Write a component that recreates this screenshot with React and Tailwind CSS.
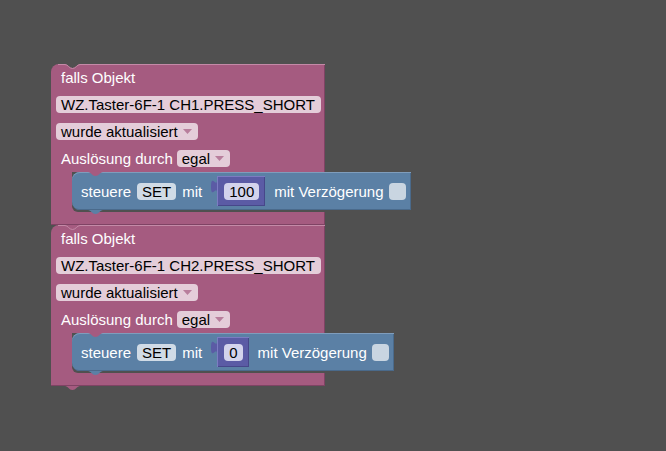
import React from "react";

const PINK = "#a55b80";
const BLUE = "#5b80a5";
const NUM = "#5b5ba5";
const BG = "#505050";

const notchPath = "M0 0 C3 0 4 4 7.5 4 C11 4 12 0 15 0 Z";

const Arrow = () => (
  <svg width="9" height="5" viewBox="0 0 9 5" className="ml-[5px]">
    <path d="M0 0 L9 0 L4.5 5 Z" fill="#b87e9c" />
  </svg>
);

const PinkField = ({ children, dropdown }) => (
  <div className="flex h-[17px] items-center rounded-[4px] bg-[#e4cdd9] pl-[5px] pr-[6px] text-black">
    <span>{children}</span>
    {dropdown && <Arrow />}
  </div>
);

const NumberBlock = ({ value }) => (
  <div className="relative ml-[15px] flex h-[30px] items-center bg-[#5b5ba5] pl-[7px] pr-[6px] shadow-[inset_1px_1px_0_#7c7cc2,inset_-1px_-1px_0_#47478a]">
    {/* output tab */}
    <svg
      width="6"
      height="13"
      viewBox="-8 0 8 15"
      preserveAspectRatio="none"
      className="absolute left-[-6px] top-[4px]"
    >
      <path d="M0 0 C0 10 -8 -8 -8 7.5 S0 5 0 15 Z" fill={NUM} />
    </svg>
    <div className="flex h-[17px] items-center rounded-[4px] bg-[#d3d3ec] px-[5px] text-black">
      {value}
    </div>
  </div>
);

const ActionBlock = ({ value }) => (
  <div className="relative flex h-[38px] w-max shrink-0 items-center rounded-l-[8px] bg-[#5b80a5] pl-[9px] pr-[5px] text-white shadow-[inset_0_1px_0_#7f9dbc,inset_-1px_-1px_0_#4a6a8b]">
    {/* previous connection notch, filled by the parent's tab */}
    <svg width="15" height="4" className="absolute left-[16px] top-0">
      <path d={notchPath} fill={PINK} />
    </svg>
    {/* next connection tab */}
    <svg width="15" height="4" className="absolute left-[16px] top-full">
      <path d={notchPath} fill={BLUE} />
    </svg>
    <span>steuere</span>
    <div className="ml-[6px] flex h-[17px] items-center rounded-[4px] bg-[#d0dbe6] px-[5px] text-black">
      SET
    </div>
    <span className="ml-[6px]">mit</span>
    <NumberBlock value={value} />
    <span className="ml-[9px]">mit Verzögerung</span>
    <div className="ml-[5px] h-[17px] w-[17px] rounded-[4px] bg-[#c9d5e1]" />
  </div>
);

const TriggerBlock = ({ channel, value, first }) => (
  <div className="relative flex w-[274px] flex-col rounded-tl-[8px] bg-[#a55b80] text-white shadow-[inset_-1px_-1px_0_#7f4364]">
    {/* top edge highlight with the connection notch */}
    <svg width="274" height="5" className="absolute left-0 top-0">
      {first && <path d="M14 0 C17 0 18 4 21.5 4 C25 4 26 0 29 0 Z" fill={BG} />}
      <path
        d="M7 0.5 L14 0.5 C17 0.5 18 4.5 21.5 4.5 C25 4.5 26 0.5 29 0.5 L274 0.5"
        fill="none"
        stroke="#c48aa7"
        strokeWidth="1"
      />
    </svg>
    {/* bottom tab */}
    <svg width="15" height="4" className="absolute left-[14px] top-full">
      <path d={notchPath} fill={PINK} />
    </svg>

    <div className="flex h-[27px] items-center pl-[10px]">falls Objekt</div>
    <div className="flex h-[27px] items-center pl-[5px]">
      <PinkField>{`WZ.Taster-6F-1 ${channel}.PRESS_SHORT`}</PinkField>
    </div>
    <div className="flex h-[27px] items-center pl-[5px]">
      <PinkField dropdown>wurde aktualisiert</PinkField>
    </div>
    <div className="flex h-[27px] items-center pl-[10px]">
      <span className="mr-[4px]">Auslösung durch</span>
      <PinkField dropdown>egal</PinkField>
    </div>

    {/* statement input */}
    <div className="flex h-[40px]">
      <div className="w-[21px] shrink-0" />
      <div className="min-w-0 flex-1 rounded-bl-[6px] bg-[#505050]">
        <ActionBlock value={value} />
      </div>
    </div>
    <div className="h-[13px]" />
  </div>
);

export default function App() {
  return (
    <div className="h-[451px] w-full overflow-hidden bg-[#505050] pl-[51px] pt-[64px] font-['Liberation_Sans',Arial,sans-serif] text-[15px] leading-none">
      <TriggerBlock channel="CH1" value="100" first />
      <TriggerBlock channel="CH2" value="0" />
    </div>
  );
}
